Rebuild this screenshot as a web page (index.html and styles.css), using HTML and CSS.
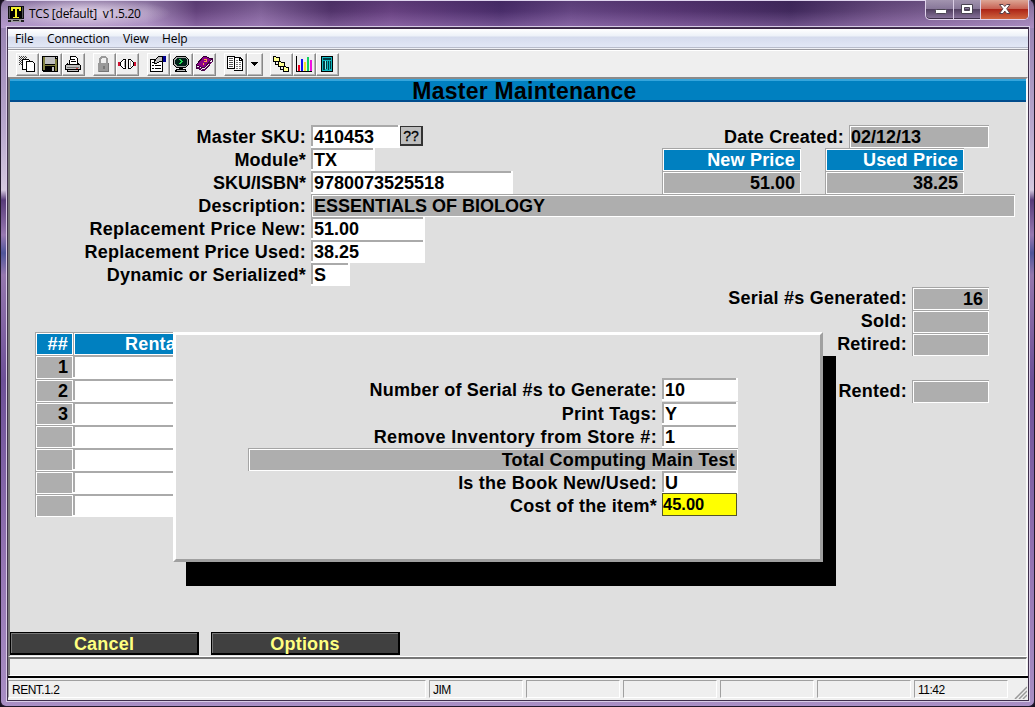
FILE: index.html
```html
<!DOCTYPE html>
<html lang="en">
<head>
<meta charset="utf-8">
<title>TCS [default] v1.5.20</title>
<link rel="stylesheet" href="styles.css">
</head>
<body>
<div class="window">
  <header class="titlebar">
    <svg class="app-icon" width="16" height="16" viewBox="0 0 16 16" shape-rendering="crispEdges"><path fill="#111" d="M0 0h16v13H0z"/><path fill="#555" d="M1 1h14v11H1z"/><path fill="#000" d="M2 1h12v11H2z"/><path fill="#f4f02c" d="M3 1h10v4h-2V3H9v8h2v1H5v-1h2V3H5v2H3z"/><path fill="#999" d="M2 13h12v3H2z"/><path fill="#222" d="M0 14h3v2H0zM13 14h3v2h-3zM5 14h6v1H5z"/></svg>
    <span class="app-title">TCS [default]&nbsp; v1.5.20</span>
    <div class="controls">
      <span class="ctl"><svg width="29" height="18"><rect x="9.500" y="9.500" width="11" height="4" rx="1" fill="#fff" stroke="#4a4452"/></svg></span>
      <span class="ctl ctl-max"><svg width="26" height="18"><path d="M7.500 4.500h11v9h-11zM10.500 7.500v3h5v-3z" fill="#fff" stroke="#4a4452" fill-rule="evenodd"/></svg></span>
      <span class="ctl ctl-close"><svg width="46" height="18"><path d="M18.500 4.500h3.500l1.800 2 1.800-2h3.400l-3.300 4.300 3.300 4.700h-3.400l-1.800-2.400-1.800 2.400h-3.500l3.400-4.700z" fill="#fff" stroke="#5a4048"/></svg></span>
    </div>
  </header>

  <main class="client">
    <nav class="menubar">
      <span class="m-file">File</span><span class="m-conn">Connection</span><span class="m-view">View</span><span>Help</span>
    </nav>

    <div class="toolbar">
      <div class="group">
        <span class="btn"><svg viewBox="0 0 18 18"><g fill="none" stroke="#444" stroke-dasharray="1 1"><path d="M1 1.500h8M2 2.500h8M1 3.500h8M2 4.500h6M1 5.500h5M2 6.500h4M1 7.500h5M2 8.500h4M1 9.500h5"/></g><path fill="#fff" stroke="#000" d="M4.500 4.500h6l2 2v8h-8z"/><path fill="#fff" stroke="#000" d="M8.500 6.500h6l2 2v8h-8z"/></svg></span>
        <span class="btn"><svg viewBox="0 0 18 18"><path fill="#000" d="M1 1h16v16H2l-1-1z"/><path fill="#808040" d="M2 2h2v13H2zM14 4h2v12h-2z"/><path fill="#c0c0c0" d="M4 2h10v7H4zM15 2h1v1h-1z"/><path fill="#808040" d="M3 10h12v1H3z"/><path fill="#c0c0c0" d="M11 12h2v4h-2z"/></svg></span>
        <span class="btn"><svg viewBox="0 0 18 18"><path fill="#fff" stroke="#000" d="M6.500 1.500h5l2 2v6h-8z"/><path stroke="#000" d="M7 4.500h4M7 6.500h5"/><path fill="#c0c0c0" stroke="#000" d="M3.500 8.500l-2 2v4h2v2h11v-2h2v-4l-2-2v1h-11z"/><path fill="#777" d="M3 12h12v1H3z"/><path fill="#d44" d="M12 13h2v1h-2z"/><path fill="#000" d="M2 14h14v1H2z"/></svg></span>
      </div>
      <div class="group g2">
        <span class="btn"><svg viewBox="0 0 18 18"><path fill="#999" d="M3 8h1V4l2-3h5l2 3v4h1v9H3zM6 8h5V4l-1-1H7L6 4z" fill-rule="evenodd"/><path fill="#777" d="M8 11h2v3H8zM13 8h1v9H4v-1h9z"/></svg></span>
        <span class="btn"><svg viewBox="0 0 18 18"><path fill="#d01030" d="M0 7h2v4H0zM16 7h2v4h-2z"/><path fill="#fff" stroke="#000" d="M7.500 4.500v9h-2l-3-3v-3l3-3zM10.500 4.500v9h2l3-3v-3l-3-3z"/><path fill="#aaa" d="M6 6h1v6H6zM12 6h1v6h-1z"/></svg></span>
      </div>
      <div class="group g3">
        <span class="btn"><svg viewBox="0 0 18 18"><path fill="#fff" stroke="#000" d="M1.500 4.500h12v12h-12z"/><path fill="#c0c0c0" stroke="#000" d="M6.500 4.500l3-3h4v5h-3l-3 2h-2v-2z"/><path fill="#000090" d="M14 1h3v6h-3z"/><path stroke="#000" d="M3 7.500h2M3 10.500h2M6 10.500h6M3 13.500h2M6 13.500h6"/></svg></span>
        <span class="btn"><svg viewBox="0 0 18 18"><path fill="#aaa" stroke="#000" d="M4.500 1.500h9l3 3v5l-3 3h-9l-3-3v-5z"/><path fill="#002018" d="M5 3h8l2 2v4l-2 2H5L3 9V5z"/><path fill="none" stroke="#20e050" d="M7 4.500h2M8 5.500h2M9 6.500h2M8 7.500h2M7 8.500h2"/><path fill="#000" d="M7 12h4v2h3l1 3H3l1-3h3z"/><path fill="#bbb" d="M5 15h8v1H5z"/></svg></span>
        <span class="btn"><svg viewBox="0 0 18 18" shape-rendering="auto"><path fill="#8c0088" stroke="#300030" d="M9 1l8 3-8 9-8-3z"/><path fill="#eee" stroke="#400040" d="M1 10l8 3 8-9v3l-8 9-8-3z"/><path fill="none" stroke="#600060" d="M2 12l7.500 3 7-8"/><path fill="none" stroke="#ffa040" stroke-width="1.200" d="M8.500 4.500h3v1.500l-2 1M8 9h1.200"/></svg></span>
      </div>
      <div class="group g4">
        <span class="btn"><svg viewBox="0 0 18 18"><path fill="#fff" stroke="#000" d="M1.500 1.500h7v12h-7z"/><path stroke="#555" d="M3 3.500h4M3 5.500h4M3 7.500h4M3 9.500h4M3 11.500h4"/><path fill="#fff" d="M9 2h6l2 2v12H9z"/><path fill="none" stroke="#000" d="M9 2.500h5l2 2v11H8M13.500 2v3h3"/><path stroke="#777" stroke-dasharray="2 1" d="M10 5.500h3M10 7.500h5M10 9.500h5M10 11.500h5M10 13.500h5"/></svg></span>
        <span class="btn btn-drop"><svg viewBox="0 0 13 18"><path fill="#000" d="M3 7h7v1H9v1H8v1H7v1H6v-1H5V9H4V8H3z"/></svg></span>
      </div>
      <div class="group g5">
        <span class="btn"><svg viewBox="0 0 18 18"><path fill="none" stroke="#000" d="M3.500 6v3.500H7M8.500 10v4.500H12"/><path fill="#ffff90" stroke="#000" d="M1.500 1.500h2l1 1h3v4h-6zM6.500 6.500h2l1 1h3v4h-6zM11.500 11.500h2l1 1h2v4h-5z"/></svg></span>
        <span class="btn"><svg viewBox="0 0 18 18"><path fill="#000" d="M1 1h1v15h15v1H1z"/><path fill="#f00020" d="M3 10h2v6H3z"/><path fill="#1010f0" d="M6 4h2v12H6z"/><path fill="#f0e030" d="M9 7h2v9H9z"/><path fill="#10d060" d="M12 2h2v14h-2z"/><path fill="#f010e0" d="M15 5h2v11h-2z"/></svg></span>
        <span class="btn"><svg viewBox="0 0 18 18"><path fill="#000" d="M3 1h12v16H3z"/><path fill="#10b8c0" d="M4 2h10v14H4z"/><path fill="#003c44" d="M5 3h8v2H5zM5 6h2v9H5zM8 6h1v8H8zM10 6h1v9h-1zM12 6h1v8h-1z"/><path fill="#80f0f0" d="M7 6h1v8H7z"/></svg></span>
      </div>
    </div>

    <section class="screen">
      <h1 class="screen-title">Master Maintenance</h1>

      <div class="form">
        <div class="row"><label class="label">Master SKU:</label><span class="field w-sku">410453</span><span class="lookup">??</span>
          <div class="right date"><label class="label-r">Date Created:</label><span class="box w-date">02/12/13</span></div></div>
        <div class="row"><label class="label">Module*</label><span class="field w-mod">TX</span>
          <div class="right prices"><span class="box head">New Price</span><span class="box head">Used Price</span></div></div>
        <div class="row"><label class="label tight">SKU/ISBN*</label><span class="field w-isbn">9780073525518</span>
          <div class="right prices"><span class="box num">51.00</span><span class="box num">38.25</span></div></div>
        <div class="row"><label class="label">Description:</label><span class="box w-desc">ESSENTIALS OF BIOLOGY</span></div>
        <div class="row"><label class="label wide">Replacement Price New:</label><span class="field w-price">51.00</span></div>
        <div class="row"><label class="label">Replacement Price Used:</label><span class="field w-price">38.25</span></div>
        <div class="row"><label class="label">Dynamic or Serialized*</label><span class="field w-ser">S</span></div>
      </div>

      <div class="lower">
        <div class="rentals">
          <span class="box head">##</span><span class="box head rental-head">Rental</span>
          <span class="box num">1</span><span class="field"></span>
          <span class="box num">2</span><span class="field"></span>
          <span class="box num">3</span><span class="field"></span>
          <span class="box"></span><span class="field"></span>
          <span class="box"></span><span class="field"></span>
          <span class="box"></span><span class="field"></span>
          <span class="box"></span><span class="field"></span>
        </div>
        <div class="stats">
          <div class="row"><label class="label-r">Serial #s Generated:</label><span class="box num w-stat">16</span></div>
          <div class="row"><label class="label-r">Sold:</label><span class="box w-stat"></span></div>
          <div class="row"><label class="label-r">Retired:</label><span class="box w-stat"></span></div>
          <div class="row rented"><label class="label-r">Rented:</label><span class="box w-stat"></span></div>
        </div>
      </div>

      <div class="actions"><span class="action">Cancel</span><span class="action">Options</span></div>

      <div class="dialog">
        <div class="row first"><label class="label-d">Number of Serial #s to Generate:</label><span class="field w-dlg">10</span></div>
        <div class="row"><label class="label-d">Print Tags:</label><span class="field w-dlg">Y</span></div>
        <div class="row"><label class="label-d wide">Remove Inventory from Store #:</label><span class="field w-dlg">1</span></div>
        <div class="row"><span class="box store">Total Computing Main Test</span></div>
        <div class="row"><label class="label-d">Is the Book New/Used:</label><span class="field w-dlg">U</span></div>
        <div class="row"><label class="label-d">Cost of the item*</label><span class="active">45.00</span></div>
      </div>
    </section>

    <div class="message"></div>
    <footer class="status">
      <span class="cell cell-main">RENT.1.2</span><span class="cell">JIM</span><span class="cell"></span><span class="cell"></span><span class="cell"></span><span class="cell"></span><span class="cell">11:42</span>
      <svg class="grip" width="13" height="13"><path d="M1 13L13 1M5 13l8-8M9 13l4-4" stroke="#999" stroke-width="1.500"/></svg>
    </footer>
  </main>
</div>
</body>
</html>
```

FILE: styles.css
```css
* { box-sizing: border-box; }

body {
  margin: 0;
  width: 1035px;
  height: 707px;
  overflow: hidden;
  background: #17101f;
  font-family: "Liberation Sans", Arial, sans-serif;
}

.window {
  width: 1035px;
  height: 707px;
  padding: 0 6px 0 7px;
  border: solid #21172b;
  border-width: 0 1px 1px;
  border-radius: 7px 7px 6px 6px;
  display: flex;
  flex-direction: column;
  background:
    linear-gradient(#e0d5ef, #e0d5ef) 0 0 / 100% 1px no-repeat,
    radial-gradient(ellipse 85px 15px at 85px 13px, rgba(228,215,234,.8) 20%, rgba(210,195,222,0)) no-repeat,
    linear-gradient(rgba(40,20,65,.25), rgba(40,20,65,.05) 40%, rgba(205,165,230,.35)) 0 0 / 100% 28px no-repeat,
    linear-gradient(90deg, #a993bf 0, #a58db9 145px, #67457f 195px, #85669d 260px, #54356d 330px, #6b4484 390px, #4b2e6c 500px, #684886 570px, #583774 680px, #422a5e 790px, #6d5084 880px, #9a80af 1035px) 0 0 / 100% 28px no-repeat,
    linear-gradient(#9a85b4 28px, #b9a9ce 130px, #d5c9df 190px, #573b79 200px, #9879b1 235px, #4f559a 253px, #9577ae 275px, #6d5098 380px, #9576b4 570px, #a98fc4 707px);
}

.titlebar { display: flex; height: 27px; flex: none; }
.app-icon { margin: 6px 5px 0 0; }
.app-title {
  font: 12px/27px "Open Sans", sans-serif;
  letter-spacing: -.25px;
  color: #000;
}
.controls {
  display: flex;
  margin-left: auto;
  margin-right: -1px;
  height: 20px;
  width: 104px;
  border: 1px solid #e0d3eb;
  border-top: 0;
  border-radius: 0 0 5px 5px;
  background: linear-gradient(#a294af, #887899 45%, #524061 50%, #8b759e);
  box-shadow: inset 0 -1px #3d2e49;
  overflow: hidden;
}
.ctl { width: 28px; border-right: 1px solid #dacde4; }
.ctl svg { display: block; }
.ctl-max { width: 27px; }
.ctl-close {
  flex: 1;
  border-right: 0;
  background: linear-gradient(#dda594, #c86455 45%, #ad2517 50%, #cf6540);
}

.client {
  flex: none;
  width: 1020px;
  height: 672px;
  margin-top: 1px;
  display: flex;
  flex-direction: column;
  background: #efefef;
  border-top: 1px solid #3b2645;
  box-shadow: 0 0 0 1px #3f2f4c, 0 0 0 2px #d9cbe6;
}

.menubar {
  display: flex;
  height: 20px;
  flex: none;
  padding-left: 7px;
  font: 12px/20px "Open Sans", sans-serif;
  letter-spacing: -.1px;
  background: linear-gradient(#fff, #edf1f8 7px, #d5dbed 8px, #e2e7f5 18px, #b8bccb 18px, #b8bccb 19px, #eff0f5 19px);
}
.m-file { width: 32px; }
.m-conn { width: 76px; }
.m-view { width: 39px; }

.toolbar {
  display: flex;
  flex: none;
  height: 28px;
  padding: 3px 0 0 8px;
  border-top: 1px solid #9999a0;
  box-shadow: inset 0 1px #fff;
}
.group { display: flex; height: 23px; }
.g2, .g3, .g4, .g5 { margin-left: 8px; }
.g3, .g5 { margin-left: 7.5px; }
.btn {
  width: 23px;
  height: 23px;
  padding: 1px;
  border: 1px solid;
  border-color: #fff #888 #888 #fff;
  box-shadow: inset -1px -1px #b5b5b5;
}
.btn svg { display: block; width: 18px; height: 18px; shape-rendering: crispEdges; }
.btn-drop { width: 16px; padding: 1px 0; }
.btn-drop svg { width: 13px; }

.screen {
  position: relative;
  flex: none;
  height: 580px;
  border: solid;
  border-width: 2px 2px 1px;
  border-color: #8b8b8b #f8f8f8 #fff #777;
  background: #dfdfdf;
  display: flex;
  flex-direction: column;
  font-weight: bold;
  font-size: 18px;
  color: #000;
}
.screen-title {
  margin: 0;
  height: 23px;
  flex: none;
  font: bold 23px/21px "Liberation Sans", Arial, sans-serif;
  letter-spacing: .25px;
  text-align: center;
  padding-left: 13px;
  background: #0080c0;
  border-top: 2px solid #35a5dc;
  border-bottom: 2px solid #004c8c;
}

.form { padding-top: 23px; }
.row { display: flex; height: 23px; line-height: 25px; white-space: nowrap; }
.label, .label-r, .label-d { text-align: right; letter-spacing: .23px; }
.label { width: 301px; padding-right: 5px; }
.label-r { padding-right: 5px; }
.label-d { width: 486px; padding-right: 5px; }
.label.wide, .label-d.wide { letter-spacing: .34px; }
.label.tight { letter-spacing: 0; }

.field {
  height: 23px;
  padding-left: 3px;
  background:
    linear-gradient(#aaa, #aaa) 0 0 / calc(100% - 2px) 2px no-repeat,
    linear-gradient(#aaa, #aaa) 0 0 / 2px calc(100% - 2px) no-repeat,
    #fff;
}
.box {
  height: 23px;
  padding-left: 2px;
  line-height: 22px;
  border: solid #a5a5a5;
  border-width: 1px 0 0 1px;
  background: #aeaeae;
  box-shadow: inset 0 0 0 1px #fff;
}
.head { background: #0080c0; color: #fff; letter-spacing: .2px; }
.head, .num { text-align: right; padding-right: 6px; }

.w-sku { width: 89px; }
.w-mod { width: 64px; }
.w-isbn { width: 202px; }
.w-price { width: 114px; }
.w-ser { width: 39px; }
.w-desc { width: 704px; }
.w-date { width: 140px; padding-left: 1px; line-height: 23px; }
.w-stat { width: 77px; }
.w-dlg { width: 77px; }

.lookup {
  width: 23px;
  height: 20px;
  margin: 1px 0 0 0;
  border: 2px solid #333;
  border-width: 1px 2px 2px 1px;
  background: #bebebe;
  font-size: 14px;
  font-weight: normal;
  line-height: 19px;
  text-align: center;
  -webkit-text-stroke: .3px #000;
}
.right { display: flex; margin-left: auto; }
.date { margin-right: 37px; }
.prices { margin-right: 62px; gap: 24px; }
.prices .box { width: 139px; }

.lower { display: flex; align-items: flex-start; height: 346px; }
.rentals {
  display: grid;
  grid-template-columns: 38px 140px;
  grid-template-rows: 23px 24px repeat(6, 23px);
  margin: 46px 0 0 25px;
}
.rentals .box { height: auto; padding-right: 5px; }
.rentals .field { height: auto; }
.rentals .rental-head { text-align: left; padding-left: 51px; }
.stats { margin: 1px 37px 0 auto; }
.stats .row { justify-content: flex-end; line-height: 23px; }
.stats .rented { margin-top: 24px; }

.actions { display: flex; gap: 12px; }
.action {
  width: 189px;
  height: 23px;
  line-height: 22px;
  text-align: center;
  color: #ffff80;
  letter-spacing: .2px;
  background: #404040;
  border: 1px solid #000;
  border-width: 1px 2px 2px 1px;
  box-shadow: inset 1px 1px #777;
}

/* Popup panel drawn over the rental grid */
.dialog {
  position: absolute;
  left: 163px;
  top: 253px;
  width: 650px;
  height: 230px;
  border: 3px solid;
  border-color: #fff #a0a0a0 #a0a0a0 #fff;
  background: #dfdfdf;
  box-shadow: 13px 24px #000;
  padding-top: 43px;
}
.dialog .first { height: 24px; }
.dialog .w-dlg { width: 76px; }
.dialog .box.store {
  width: 490px;
  margin-left: 72px;
  text-align: right;
  padding-right: 3px;
  letter-spacing: .2px;
}
.active {
  width: 75px;
  height: 23px;
  margin-top: -1px;
  border: 1px solid #55552a;
  background: #ff0;
  font-size: 16.500px;
  line-height: 20px;
}

.message {
  flex: none;
  height: 19px;
  margin-right: 1px;
  border: solid;
  border-width: 2px 1px 1px 2px;
  border-color: #777 #fff #fff #777;
}
.status {
  display: flex;
  flex: 1;
  gap: 3px;
  border-top: 2px solid #000;
  padding-top: 2px;
  font-size: 12px;
  line-height: 18px;
  letter-spacing: -.5px;
}
.cell {
  width: 94px;
  height: 18px;
  padding-left: 3px;
  border: 1px solid;
  border-color: #a0a0a0 #fff #fff #a0a0a0;
}
.cell-main { width: 418px; }
.grip { margin: 6px 0 0 3px; }
```
